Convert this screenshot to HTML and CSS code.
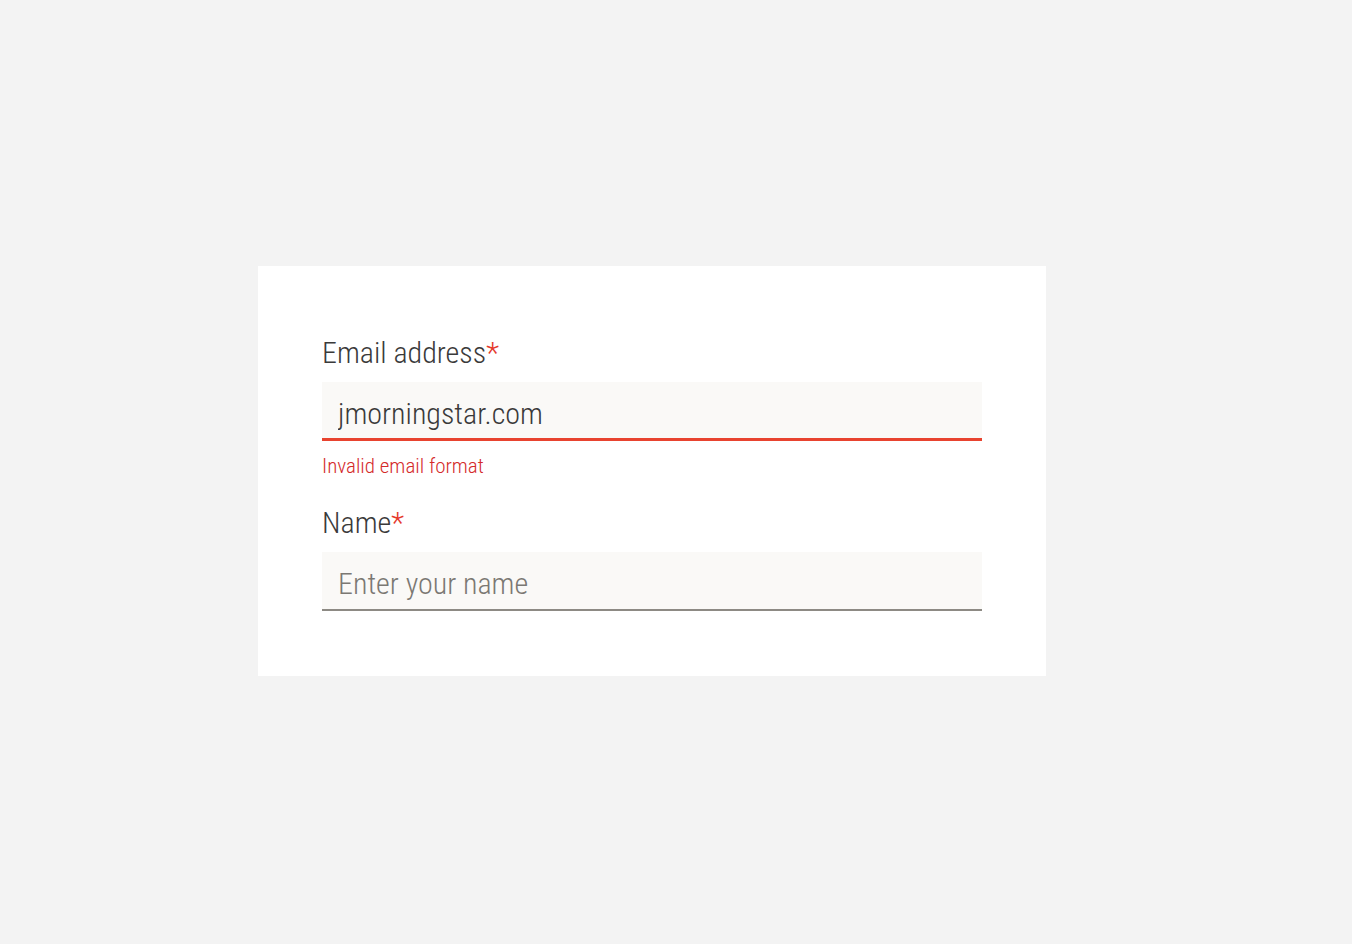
FILE: index.html
```html
<!DOCTYPE html>
<html lang="en">
<head>
    <meta charset="UTF-8">
    <meta name="viewport" content="width=device-width, initial-scale=1.0">
    <title>Form</title>
    <link rel="stylesheet" href="styles.css">
</head>
<body>
    <div class="page">
        <form class="card">
            <div class="field">
                <label class="label" for="email">Email address<span class="req">*</span></label>
                <input class="input input-error" id="email" type="text" value="jmorningstar.com">
                <div class="error">Invalid email format</div>
            </div>
            <div class="field">
                <label class="label" for="name">Name<span class="req">*</span></label>
                <input class="input" id="name" type="text" placeholder="Enter your name">
            </div>
        </form>
    </div>
</body>
</html>
```

FILE: styles.css
```css
html,
body {
    margin: 0;
    height: 100%;
}
body {
    background: #f3f3f3;
    font-family: "Roboto Condensed", "Liberation Sans Narrow", "DejaVu Sans Condensed", sans-serif;
    font-weight: 300;
    color: #3a3a3a;
}
.page {
    padding: 266px 0 0 258px;
}
.card {
    width: 660px;
    padding: 64px 64px 65px;
    background: #fff;
    display: flex;
    flex-direction: column;
    gap: 20px;
}
.field {
    display: flex;
    flex-direction: column;
}
.label {
    font-size: 30px;
    line-height: 46px;
    margin-bottom: 6px;
}
.req {
    color: #e5392d;
}
.input {
    box-sizing: border-box;
    width: 100%;
    height: 59px;
    margin: 0;
    padding: 6px 16px 0;
    border: none;
    border-bottom: 2px solid #8d8a84;
    background: #faf9f7;
    font-family: inherit;
    font-weight: 300;
    font-size: 30px;
    color: #3a3a3a;
    outline: none;
}
.input::placeholder {
    color: #7b7873;
}
.input-error {
    border-bottom: 3px solid #e8432f;
}
.error {
    margin-top: 11px;
    font-size: 21px;
    line-height: 28px;
    color: #d42a2a;
}
```
